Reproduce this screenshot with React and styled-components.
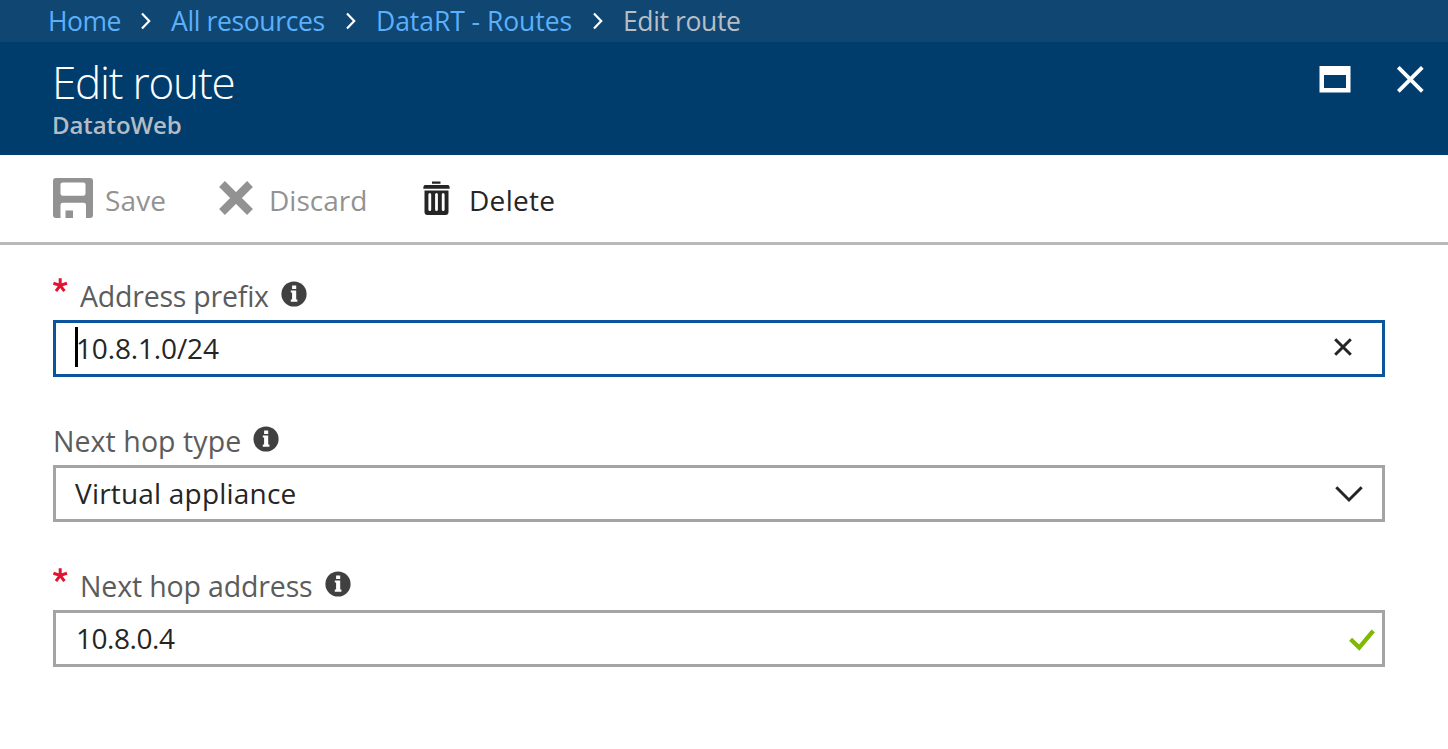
import React from "react";
import styled, { createGlobalStyle } from "styled-components";

const GlobalStyle = createGlobalStyle`
  * { box-sizing: border-box; }
  body {
    margin: 0;
    background: #fff;
    font-family: "Open Sans", "Noto Sans", sans-serif;
    color: #252525;
  }
`;

const Blade = styled.div`
  display: flex;
  flex-direction: column;
  min-height: 749px;
  overflow: hidden;
`;

const Breadcrumb = styled.nav`
  display: flex;
  align-items: center;
  height: 42px;
  padding-left: 48px;
  background: #0f4672;
`;

const Text = styled.span`
  display: block;
  flex: none;
  white-space: nowrap;
  width: ${(p) => p.$w}px;
  letter-spacing: ${(p) => p.$ls || 0}px;
`;

const Crumb = styled(Text)`
  color: ${(p) => (p.$current ? "#b9bec4" : "#5cb0fb")};
  font-size: 26.5px;
  line-height: 42px;
`;

const CrumbArrow = styled.svg`
  flex: none;
  width: 12px;
  height: 18px;
  margin: 0 19px 0 20px;
`;

const Header = styled.header`
  display: flex;
  justify-content: space-between;
  height: 113px;
  padding: 11px 24px 0 52px;
  background: #003c6c;
`;

const Title = styled.h1`
  margin: 0;
  color: #fff;
  font-size: 44px;
  font-weight: 300;
  line-height: 58px;
  white-space: nowrap;
  letter-spacing: ${(p) => p.$ls}px;
`;

const Subtitle = styled.div`
  color: #b5bcc4;
  font-size: 24px;
  font-weight: 600;
  line-height: 28px;
  white-space: nowrap;
  letter-spacing: ${(p) => p.$ls}px;
`;

const WindowActions = styled.div`
  display: flex;
  align-items: flex-start;
  gap: 46px;
  padding-top: 13px;
`;

const Icon = styled.svg`
  display: block;
  flex: none;
  margin-top: ${(p) => p.$top || 0}px;
`;

const Toolbar = styled.div`
  display: flex;
  height: 90px;
  padding-left: 53px;
  border-bottom: 3px solid #b9b9b9;
`;

const Command = styled.div`
  display: flex;
  align-items: flex-start;
  gap: ${(p) => p.$gap}px;
  margin-right: ${(p) => p.$after || 0}px;
  color: ${(p) => (p.$disabled ? "#929292" : "#252525")};
`;

const CommandLabel = styled(Text)`
  font-size: 28px;
  line-height: 38px;
  margin-top: 26px;
`;

const Form = styled.form`
  display: flex;
  flex-direction: column;
  padding: 30px 63px 0 53px;
`;

const Field = styled.div`
  height: 145px;
`;

const LabelRow = styled.div`
  display: flex;
  height: 45px;
`;

const Star = styled.svg`
  flex: none;
  width: 15px;
  height: 16px;
  margin: 2px 12px 0 0;
`;

const Label = styled(Text)`
  color: #5c5c5c;
  font-size: 28.5px;
  line-height: 42px;
`;

const InfoIcon = styled.svg`
  flex: none;
  width: 26px;
  height: 26px;
  margin: 6px 0 0;
`;

const Box = styled.div`
  display: flex;
  align-items: center;
  justify-content: space-between;
  height: 57px;
  border: 3px solid ${(p) => (p.$focused ? "#0a559c" : "#a4a4a4")};
  padding: 0 ${(p) => p.$right}px 0 ${(p) => p.$left}px;
`;

const Value = styled(Text)`
  font-size: 28px;
  line-height: 50px;
  padding-bottom: 1px;
`;

const Entry = styled.div`
  display: flex;
  align-items: center;
`;

const Caret = styled.span`
  width: 3px;
  height: 40px;
  margin: -3px -2px 0 0;
  background: #000;
`;

const Arrow = () => (
  <CrumbArrow viewBox="0 0 12 18">
    <path d="M2 1.5 9.2 9 2 16.5" fill="none" stroke="#fff" strokeWidth="2.2" />
  </CrumbArrow>
);

const Required = () => (
  <Star viewBox="0 0 15 16">
    <path
      d="M7.2 8.4V1.2M7.2 8.4 0.4 6.2M7.2 8.4 14 6.2M7.2 8.4 3 14.2M7.2 8.4 11.4 14.2"
      fill="none"
      stroke="#e3122e"
      strokeWidth="3"
    />
  </Star>
);

const Info = () => (
  <InfoIcon viewBox="0 0 26 26">
    <circle cx="13" cy="13" r="12.6" fill="#404040" />
    <path d="M9.8 9.6h5.4v9H16.4v2.1H9.8v-2.1h1.3v-7H9.8zM11.1 4.4h4.1v3.5h-4.1z" fill="#fff" />
  </InfoIcon>
);

export default function App() {
  return (
    <Blade>
      <GlobalStyle />
      <Breadcrumb>
        <Crumb $w={72} $ls={-0.5}>Home</Crumb>
        <Arrow />
        <Crumb $w={154} $ls={-0.37}>All resources</Crumb>
        <Arrow />
        <Crumb $w={196} $ls={-0.05}>DataRT - Routes</Crumb>
        <Arrow />
        <Crumb $current $w={120} $ls={-0.38}>Edit route</Crumb>
      </Breadcrumb>
      <Header>
        <div>
          <Title $ls={-1.2}>Edit route</Title>
          <Subtitle $ls={-0.1}>DatatoWeb</Subtitle>
        </div>
        <WindowActions>
          <Icon width="32" height="27" viewBox="0 0 32 27">
            <path d="M0.5 0h31v26.5h-31zM5 9v13h22V9z" fill="#fff" fillRule="evenodd" />
          </Icon>
          <Icon width="27" height="27" viewBox="0 0 27 27">
            <path d="M1.3 1.3 25.3 25.3M25.3 1.3 1.3 25.3" stroke="#fff" strokeWidth="3.8" />
          </Icon>
        </WindowActions>
      </Header>
      <Toolbar>
        <Command $disabled $gap={12} $after={53}>
          <Icon $top={23} width="40" height="40" viewBox="0 0 40 40">
            <path
              d="M3 0H37Q40 0 40 3V37Q40 40 37 40H33V27Q33 24.7 30.7 24.7H9.8Q7.5 24.7 7.5 27V40H3Q0 40 0 37V3Q0 0 3 0ZM9.5 4.5Q7.5 4.5 7.5 6.5V15.5Q7.5 17.8 9.8 17.8H30.2Q32.5 17.8 32.5 15.5V6.5Q32.5 4.5 30.5 4.5ZM12.5 32.5H20V40H12.5Z"
              fill="currentColor"
              fillRule="evenodd"
            />
          </Icon>
          <CommandLabel $w={61} $ls={0.15}>Save</CommandLabel>
        </Command>
        <Command $disabled $gap={16} $after={57}>
          <Icon $top={26} width="34" height="34" viewBox="0 0 34 34">
            <path d="M3 3 31 31M31 3 3 31" stroke="currentColor" strokeWidth="8.2" />
          </Icon>
          <CommandLabel $w={97}>Discard</CommandLabel>
        </Command>
        <Command $gap={19}>
          <Icon $top={26} width="27" height="35" viewBox="0 0 27 35">
            <path
              d="M9 0.5H17.5V2.8H9ZM2 4H25Q26.7 4 26.7 7.7H0.3Q0.3 4 2 4ZM1.5 9.5H25.5V31Q25.5 34 22.5 34H4.5Q1.5 34 1.5 31ZM5.4 13.5V28.5Q5.4 30 6.8 30T8.2 28.5V13.5Q8.2 12 6.8 12T5.4 13.5ZM12.1 13.5V28.5Q12.1 30 13.5 30T14.9 28.5V13.5Q14.9 12 13.5 12T12.1 13.5ZM18.8 13.5V28.5Q18.8 30 20.2 30T21.6 28.5V13.5Q21.6 12 20.2 12T18.8 13.5Z"
              fill="currentColor"
              fillRule="evenodd"
            />
          </Icon>
          <CommandLabel $w={90} $ls={0.3}>Delete</CommandLabel>
        </Command>
      </Toolbar>
      <Form>
        <Field>
          <LabelRow>
            <Required />
            <Label $w={201} $ls={-0.22}>Address prefix</Label>
            <Info />
          </LabelRow>
          <Box $focused $left={19} $right={30}>
            <Entry>
              <Caret />
              <Value $w={150} $ls={-0.15}>10.8.1.0/24</Value>
            </Entry>
            <Icon $top={-4} width="18" height="18" viewBox="0 0 18 18">
              <path d="M1.2 1.2 16.8 16.8M16.8 1.2 1.2 16.8" stroke="#252525" strokeWidth="3" />
            </Icon>
          </Box>
        </Field>
        <Field>
          <LabelRow>
            <Label $w={200} $ls={0.08}>Next hop type</Label>
            <Info />
          </LabelRow>
          <Box $left={19} $right={19}>
            <Value $w={222} $ls={0.2}>Virtual appliance</Value>
            <Icon $top={2} width="28" height="17" viewBox="0 0 28 17">
              <path d="M1.3 1.3 14 14 26.7 1.3" fill="none" stroke="#252525" strokeWidth="3" />
            </Icon>
          </Box>
        </Field>
        <Field>
          <LabelRow>
            <Required />
            <Label $w={245} $ls={-0.15}>Next hop address</Label>
            <Info />
          </LabelRow>
          <Box $left={20} $right={7}>
            <Value $w={100} $ls={-0.45}>10.8.0.4</Value>
            <Icon $top={2} width="26" height="22" viewBox="0 0 26 22">
              <path d="M1.6 10.3 10.2 18.6 24.2 1.8" fill="none" stroke="#7fba00" strokeWidth="4.3" />
            </Icon>
          </Box>
        </Field>
      </Form>
    </Blade>
  );
}
